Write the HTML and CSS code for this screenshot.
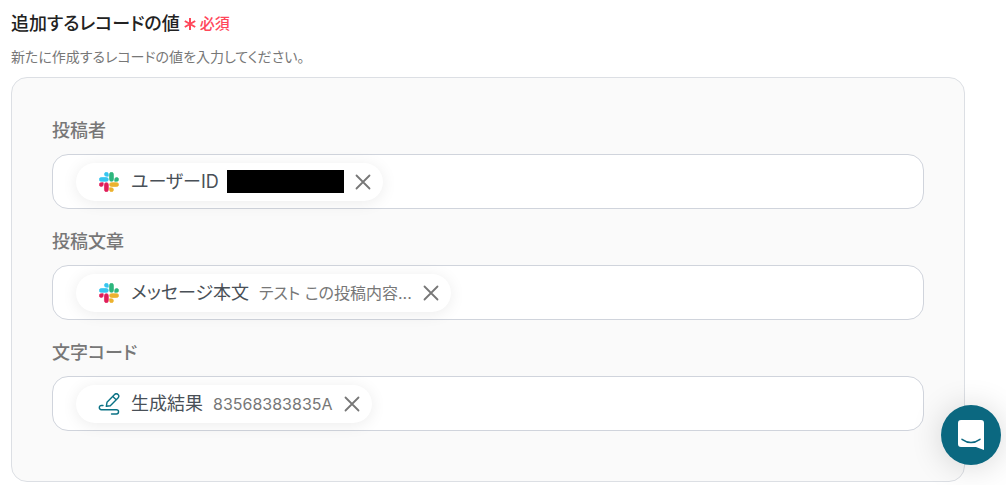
FILE: index.html
```html
<!DOCTYPE html>
<html lang="ja">
  <head>
    <meta charset="UTF-8" />
    <meta name="viewport" content="width=device-width, initial-scale=1.0" />
    <title>追加するレコードの値</title>
    <link rel="stylesheet" href="styles.css" />
  </head>
  <body>
    <svg class="sprite" aria-hidden="true">
      <symbol id="slack" viewBox="-1 -1 56 56">
        <path fill="#36c5f0" stroke="#36c5f0" stroke-width="2" d="M19.7 0a5.4 5.4 0 1 0 0 10.8h5.4V5.4A5.4 5.4 0 0 0 19.7 0m0 14.4H5.4a5.4 5.4 0 1 0 0 10.8h14.3a5.4 5.4 0 1 0 0-10.8" />
        <path fill="#2eb67d" stroke="#2eb67d" stroke-width="2" d="M53.8 19.8a5.4 5.4 0 1 0-10.8 0v5.4h5.4a5.4 5.4 0 0 0 5.4-5.4m-14.4 0V5.4a5.4 5.4 0 1 0-10.8 0v14.4a5.4 5.4 0 1 0 10.8 0" />
        <path fill="#ecb22e" stroke="#ecb22e" stroke-width="2" d="M34 54a5.4 5.4 0 1 0 0-10.8h-5.4v5.4A5.4 5.4 0 0 0 34 54m0-14.4h14.4a5.4 5.4 0 1 0 0-10.8H34a5.4 5.4 0 1 0 0 10.8" />
        <path fill="#e01e5a" stroke="#e01e5a" stroke-width="2" d="M0 34.2a5.4 5.4 0 1 0 10.8 0v-5.4H5.4A5.4 5.4 0 0 0 0 34.2m14.3 0v14.4a5.4 5.4 0 1 0 10.8 0V34.2a5.4 5.4 0 1 0-10.8 0" />
      </symbol>
      <symbol id="close" viewBox="0 0 16 16">
        <path fill="none" stroke="currentColor" stroke-width="1.8" stroke-linecap="round" d="M1.5 1.5l13 13M14.5 1.5l-13 13" />
      </symbol>
    </svg>

    <main>
      <h1 class="title">
        追加するレコードの値
        <span class="required">
          <svg class="asterisk" viewBox="0 0 12 12" aria-hidden="true">
            <path d="M6 0v12M.8 3l10.400 6M11.200 3L.8 9" />
          </svg>
          必須
        </span>
      </h1>
      <p class="description">新たに作成するレコードの値を入力してください。</p>

      <form class="card">
        <section class="field">
          <h2 class="label">投稿者</h2>
          <div class="box">
            <span class="chip">
              <svg class="icon slack"><use href="#slack" /></svg>
              <span class="name">ユーザーID</span>
              <span class="masked"></span>
              <button class="remove" type="button" aria-label="削除"><svg class="close"><use href="#close" /></svg></button>
            </span>
          </div>
        </section>
        <section class="field">
          <h2 class="label">投稿文章</h2>
          <div class="box">
            <span class="chip">
              <svg class="icon slack"><use href="#slack" /></svg>
              <span class="name">メッセージ本文</span>
              <span class="value">テスト この投稿内容...</span>
              <button class="remove" type="button" aria-label="削除"><svg class="close"><use href="#close" /></svg></button>
            </span>
          </div>
        </section>
        <section class="field">
          <h2 class="label">文字コード</h2>
          <div class="box">
            <span class="chip">
              <svg class="icon pen" viewBox="0 0 22 22">
                <path d="M8.300 13.300l.7-4 7.6-7.8a2.3 2.3 0 0 1 3.400 3.400l-7.700 7.800zM14.800 3.400l3.400 3.400" />
                <path d="M5 12.5H3.4a2.1 2.1 0 0 0 0 4.2h15a2.1 2.1 0 0 1 0 4.3H13.5" />
              </svg>
              <span class="name">生成結果</span>
              <span class="value">83568383835A</span>
              <button class="remove" type="button" aria-label="削除"><svg class="close"><use href="#close" /></svg></button>
            </span>
          </div>
        </section>
      </form>
    </main>

    <button class="chat" type="button" aria-label="チャットを開く">
      <svg viewBox="0 0 28 32" aria-hidden="true">
        <path fill="#fff" d="M4 1h20a3 3 0 0 1 3 3v27l-8-3H4a3 3 0 0 1-3-3V4a3 3 0 0 1 3-3z" />
        <path fill="none" stroke="#0b6880" stroke-width="1.5" stroke-linecap="round" d="M5 20.3q9 6.4 18 0" />
      </svg>
    </button>
  </body>
</html>
```
FILE: styles.css
```css
* {
  margin: 0;
  padding: 0;
  box-sizing: border-box;
}

body {
  font-family: Inter, "Noto Sans CJK JP", sans-serif;
  font-feature-settings: "palt";
  color: #222;
  background-color: #fff;
}

.sprite {
  display: none;
}

main {
  padding: 11px 41px 0 11px;
}

/* HEADING */
.title {
  display: flex;
  align-items: center;
  gap: 4px;
  font-size: 18px;
  font-weight: 500;
  line-height: 26px;
}

.required {
  display: flex;
  align-items: center;
  gap: 4px;
  color: #ff475a;
  font-size: 15px;
}

.asterisk {
  width: 12px;
  height: 12px;
  fill: none;
  stroke: currentColor;
  stroke-width: 2;
}

.description {
  margin-top: 10px;
  color: #777;
  font-size: 14px;
  line-height: 20px;
}

/* CARD */
.card {
  display: flex;
  flex-direction: column;
  gap: 20px;
  margin-top: 10px;
  padding: 40px 40px 50px;
  border: 1px solid #dcdfe4;
  border-radius: 16px;
  background-color: #fafafa;
}

.label {
  margin-bottom: 11px;
  color: #777;
  font-size: 18px;
  font-weight: 500;
  line-height: 25px;
}

.box {
  display: flex;
  align-items: center;
  height: 55px;
  padding: 0 23px;
  border: 1px solid #d0d4dc;
  border-radius: 16px;
  background-color: #fff;
}

.chip {
  display: flex;
  align-items: center;
  height: 38px;
  padding: 0 12px 0 22px;
  border-radius: 19px;
  background-color: #fff;
  box-shadow: 0 2px 16px rgba(0, 0, 0, 0.08);
}

.icon {
  width: 22px;
  height: 22px;
}

.slack {
  padding: 1px;
}

.pen {
  fill: none;
  stroke: #0b7285;
  stroke-width: 1.4;
  stroke-linejoin: round;
  stroke-linecap: round;
}

.name {
  margin: 0 8px 0 11px;
  color: #495057;
  font-size: 18px;
  line-height: 26px;
}

.value {
  margin-left: 2px;
  color: #777;
  font-size: 16px;
  line-height: 24px;
}

.masked {
  width: 117px;
  height: 23px;
  background-color: #000;
}

.remove {
  display: flex;
  margin-left: 11px;
  border: none;
  background: none;
  color: #777;
  cursor: pointer;
}

.close {
  width: 16px;
  height: 16px;
}

/* CHAT LAUNCHER */
.chat {
  position: fixed;
  right: 5px;
  bottom: 20px;
  display: flex;
  align-items: center;
  justify-content: center;
  width: 60px;
  height: 60px;
  border: none;
  border-radius: 50%;
  background-color: #0b6880;
  box-shadow: 0 2px 32px rgba(0, 0, 0, 0.16);
  cursor: pointer;
}

.chat svg {
  width: 28px;
  height: 32px;
}
```
